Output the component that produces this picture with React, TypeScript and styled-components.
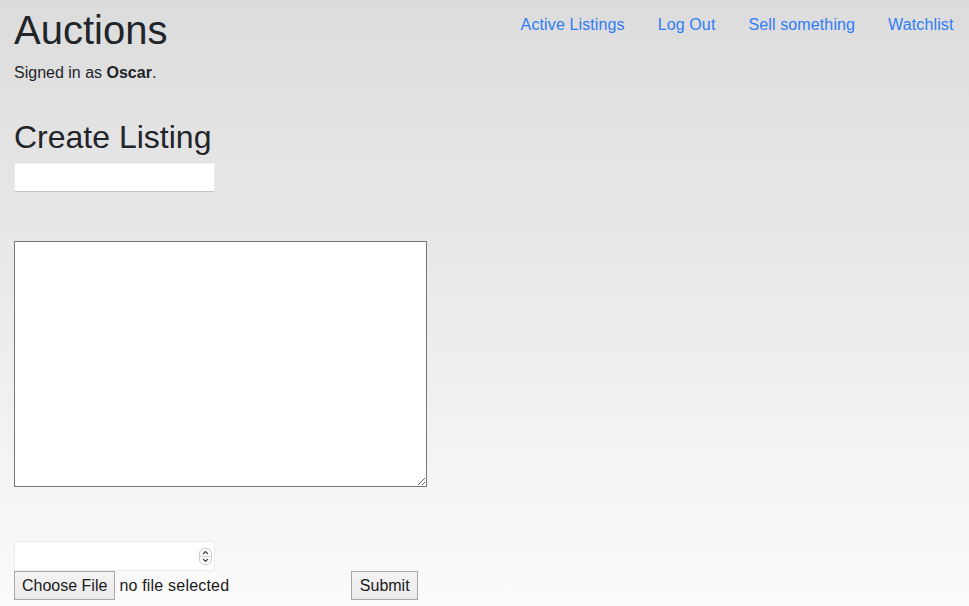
import React from "react";
import styled, { createGlobalStyle } from "styled-components";

const GlobalStyle = createGlobalStyle`
  html, body {
    margin: 0;
    padding: 0;
  }
  body {
    min-height: 606px;
    background: linear-gradient(to bottom, #dcdcdc 0px, #fbfbfb 606px);
    font-family: "Liberation Sans", Arial, sans-serif;
    color: #212529;
    font-size: 16px;
    line-height: 1.5;
  }
`;

const Page = styled.div`
  padding: 0 14px;
  height: 606px;
  overflow: hidden;
  box-sizing: border-box;
`;

const Header = styled.header`
  display: flex;
  justify-content: space-between;
  align-items: flex-start;
`;

const Title = styled.h1`
  margin: 6px 0 7px;
  font-size: 40px;
  font-weight: 400;
  line-height: 1.2;
`;

const Nav = styled.nav`
  display: flex;
  margin-top: 5px;
  margin-right: -15px;
`;

const NavLink = styled.a`
  padding: 8px 16.5px;
  color: #2f7cf6;
  text-decoration: none;
  font-size: 16px;
  line-height: 24px;
  letter-spacing: 0.12px;
`;

const SignedIn = styled.div`
  margin: 0;
  line-height: 24px;
`;

const Heading = styled.h2`
  margin: 33px 0 7px;
  font-size: 32px;
  font-weight: 400;
  line-height: 1.2;
`;

const Form = styled.form`
  display: flex;
  flex-direction: column;
  align-items: flex-start;
`;

const TextInput = styled.input`
  box-sizing: border-box;
  width: 201px;
  height: 29px;
  border: 1px solid #ececec;
  border-bottom-color: #c4c4c4;
  background: #fff;
  outline: none;
  padding: 0 4px;
  font: inherit;
`;

const TextArea = styled.textarea`
  box-sizing: border-box;
  width: 413px;
  height: 246px;
  margin-top: 49px;
  border: 1px solid #767676;
  background: #fff;
  padding: 2px;
  font: inherit;
  outline: none;
`;

const NumberWrap = styled.div`
  box-sizing: border-box;
  width: 201px;
  height: 30px;
  margin-top: 54px;
  border: 1px solid #ececec;
  background: #fff;
  display: flex;
  align-items: center;
  justify-content: flex-end;
  padding-right: 2px;
`;

const NumberField = styled.input`
  flex: 1;
  min-width: 0;
  border: none;
  outline: none;
  background: transparent;
  font: inherit;
  padding: 0 4px;
`;

const Spinner = styled.svg`
  width: 13px;
  height: 17px;
  flex: none;
`;

const BottomRow = styled.div`
  display: flex;
  align-items: center;
  width: 100%;
`;

const Button = styled.button<{ $offset?: number; $pad?: number }>`
  box-sizing: border-box;
  height: 29px;
  padding: 0 ${(p) => p.$pad ?? 7}px;
  margin-left: ${(p) => p.$offset ?? 0}px;
  background: linear-gradient(to bottom, #f3f3f3, #ebebeb);
  border: 1px solid #a8a8a8;
  border-radius: 0;
  color: #1a1a1a;
  font-family: "Liberation Sans", Arial, sans-serif;
  font-size: 16px;
  line-height: 27px;
`;

const FileLabel = styled.span`
  margin-left: 4px;
  color: #1a1a1a;
  font-size: 16px;
  letter-spacing: 0.2px;
`;

export default function App() {
  return (
    <>
      <GlobalStyle />
      <Page>
        <Header>
          <Title>Auctions</Title>
          <Nav>
            <NavLink href="#">Active Listings</NavLink>
            <NavLink href="#">Log Out</NavLink>
            <NavLink href="#">Sell something</NavLink>
            <NavLink href="#">Watchlist</NavLink>
          </Nav>
        </Header>
        <SignedIn>
          Signed in as <strong>Oscar</strong>.
        </SignedIn>
        <Heading>Create Listing</Heading>
        <Form onSubmit={(e) => e.preventDefault()}>
          <TextInput type="text" />
          <TextArea />
          <NumberWrap>
            <NumberField type="text" inputMode="numeric" />
            <Spinner viewBox="0 0 13 17">
              <rect x="0.5" y="0.5" width="12" height="16" rx="5" fill="#fff" stroke="#c8c8c8" />
              <line x1="1" y1="8.5" x2="12" y2="8.5" stroke="#d8d8d8" />
              <path d="M4 6 L6.5 3.5 L9 6" fill="none" stroke="#444" strokeWidth="1.2" />
              <path d="M4 11 L6.5 13.5 L9 11" fill="none" stroke="#444" strokeWidth="1.2" />
            </Spinner>
          </NumberWrap>
          <BottomRow>
            <Button type="button">Choose File</Button>
            <FileLabel>no file selected</FileLabel>
            <Button type="submit" $offset={122} $pad={7.5}>Submit</Button>
          </BottomRow>
        </Form>
      </Page>
    </>
  );
}
